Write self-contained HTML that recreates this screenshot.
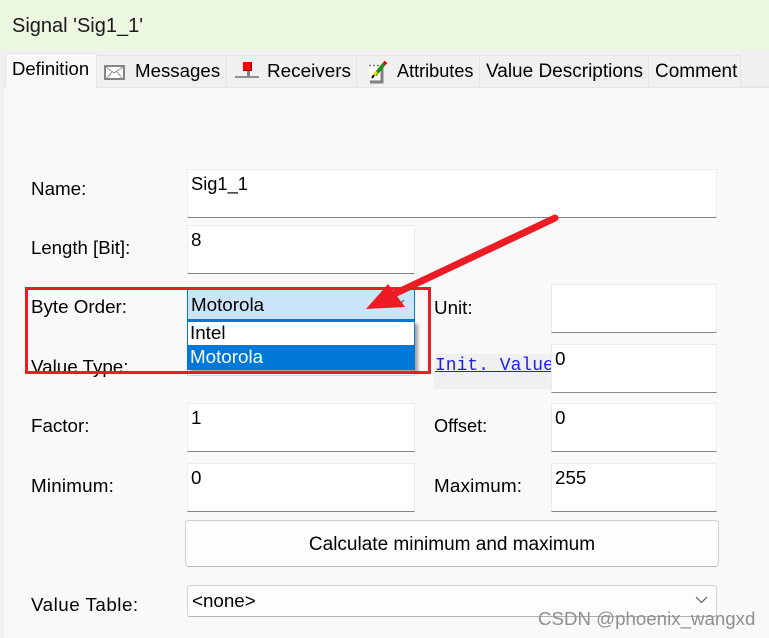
<!DOCTYPE html>
<html><head><meta charset="utf-8">
<style>
html,body{margin:0;padding:0}
body{width:769px;height:638px;overflow:hidden;position:relative;background:#f9f9f9;font-family:"Liberation Sans",sans-serif;font-size:18.8px;color:#000}
div,span{position:absolute;white-space:nowrap;box-sizing:border-box}
.t{line-height:22px}
.inp{background:#fff;border:1px solid #ececec;border-bottom:1px solid #858585}
.tab{background:#f0f0f0;border:1px solid #e4e4e4;border-bottom:none;height:32px;top:55px}
</style></head><body>
<div style="left:0;top:0;width:769px;height:50px;background:#ebf7e1"></div>
<div style="left:0;top:50px;width:769px;height:36px;background:#f0f0f0"></div>
<div style="left:0;top:86px;width:769px;height:2px;background:#e6e6e6"></div>
<div style="left:0;top:86px;width:4px;height:552px;background:#f0f0f0"></div>
<div class="t" style="left:12px;top:15px;color:#1a1a1a;font-size:20px">Signal 'Sig1_1'</div>

<div class="tab" style="left:96px;width:131px"></div>
<div class="tab" style="left:226px;width:131px"></div>
<div class="tab" style="left:356px;width:124px"></div>
<div class="tab" style="left:479px;width:170px"></div>
<div class="tab" style="left:648px;width:93px"></div>
<div style="left:5px;top:53px;width:92px;height:35px;background:#f9f9f9;border:1px solid #e4e4e4;border-bottom:none"></div>
<div class="t" style="left:12px;top:58px;font-size:18.5px">Definition</div>
<div class="t" style="left:135px;top:60px;font-size:18.7px">Messages</div>
<div class="t" style="left:267px;top:61px;font-size:18.9px">Receivers</div>
<div class="t" style="left:397px;top:60px;font-size:18.1px">Attributes</div>
<div class="t" style="left:486px;top:61px;font-size:19px">Value Descriptions</div>
<div class="t" style="left:655px;top:61px;font-size:19px">Comment</div>

<svg style="position:absolute;left:104px;top:65px" width="21" height="15" shape-rendering="crispEdges"><rect width="21" height="15" fill="#848484"/><rect x="2" y="2" width="17" height="11" fill="#fff"/><path d="M2 2L10 8L19 2M3 13L8 7M18 13L13 7" fill="none" stroke="#999" stroke-width="1"/></svg>
<svg style="position:absolute;left:234px;top:61px" width="26" height="18" shape-rendering="crispEdges"><rect x="9" y="1" width="9" height="9" fill="#f00"/><rect x="17" y="1" width="1" height="9" fill="#900"/><rect x="9" y="9" width="9" height="1" fill="#900"/><rect x="13" y="10" width="3" height="5" fill="#808080"/><rect x="1" y="15" width="24" height="2" fill="#909090"/></svg>
<svg style="position:absolute;left:366px;top:59px" width="24" height="25"><rect x="3" y="7" width="14" height="14" fill="#fff"/><path d="M4 23H16V8" fill="none" stroke="#808080" stroke-width="3"/><path d="M3 6.5H13" stroke="#808080" stroke-width="1.5" stroke-dasharray="2 2"/><path d="M9 16L18 5" stroke="#1f8a10" stroke-width="3.5"/><path d="M8 16L11 13" stroke="#ece000" stroke-width="3"/><path d="M18 5L20 3" stroke="#e00000" stroke-width="3.5"/><path d="M6 19L8 16" stroke="#000" stroke-width="2"/></svg>

<div class="t" style="left:31px;top:178px">Name:</div>
<div class="inp" style="left:187px;top:169px;width:530px;height:49px"></div>
<div class="t" style="left:191px;top:173px;font-size:18.3px">Sig1_1</div>
<div class="t" style="left:31px;top:237px;font-size:18.6px">Length [Bit]:</div>
<div class="inp" style="left:187px;top:225px;width:228px;height:49px"></div>
<div class="t" style="left:191px;top:229px">8</div>
<div class="t" style="left:31px;top:296px">Byte Order:</div>
<div class="t" style="left:31px;top:356px">Value Type:</div>
<div style="left:187px;top:350px;width:228px;height:26px;background:#fff;border:1px solid #ddd"></div>
<div style="left:187px;top:289px;width:228px;height:32px;background:#cce4f7;border:1px solid #0078d7;border-width:1px 1px 2px 1px"></div>
<div class="t" style="left:191px;top:294px">Motorola</div>
<svg style="position:absolute;left:392px;top:299px" width="14" height="9"><path d="M1 1L6.5 6.5L12 1" fill="none" stroke="#555" stroke-width="1.2"/></svg>
<div style="left:187px;top:321px;width:228px;height:49px;background:#fff;border:1px solid #0078d7;box-shadow:3px 3px 3px rgba(0,0,0,.35)"></div>
<div style="left:187px;top:345px;width:228px;height:25px;background:#0078d7"></div>
<div class="t" style="left:190px;top:322px">Intel</div>
<div class="t" style="left:190px;top:346px;color:#fff">Motorola</div>

<div class="t" style="left:434px;top:297px">Unit:</div>
<div class="inp" style="left:551px;top:284px;width:166px;height:49px"></div>
<div style="left:434px;top:354px;width:117px;height:35px;background:#f0f0f0;overflow:hidden"><span style="left:1px;top:1px;font-family:'Liberation Mono',monospace;font-size:18px;line-height:22px;color:#2020ee;text-decoration:underline">Init. Value</span></div>
<div class="inp" style="left:551px;top:344px;width:166px;height:49px"></div>
<div class="t" style="left:555px;top:348px">0</div>
<div class="t" style="left:31px;top:415px">Factor:</div>
<div class="inp" style="left:187px;top:403px;width:228px;height:49px"></div>
<div class="t" style="left:191px;top:407px">1</div>
<div class="t" style="left:434px;top:415px;font-size:18.2px">Offset:</div>
<div class="inp" style="left:551px;top:403px;width:166px;height:49px"></div>
<div class="t" style="left:555px;top:407px">0</div>
<div class="t" style="left:31px;top:475px;font-size:18.8px;letter-spacing:.2px">Minimum:</div>
<div class="inp" style="left:187px;top:463px;width:228px;height:49px"></div>
<div class="t" style="left:191px;top:467px">0</div>
<div class="t" style="left:434px;top:475px;font-size:18.8px;letter-spacing:.2px">Maximum:</div>
<div class="inp" style="left:551px;top:463px;width:166px;height:49px"></div>
<div class="t" style="left:555px;top:467px">255</div>
<div style="left:185px;top:520px;width:534px;height:47px;background:#fdfdfd;border:1px solid #d0d0d0;border-bottom:1px solid #b8b8b8;border-radius:4px"></div>
<div class="t" style="left:185px;top:534px;width:534px;text-align:center;font-size:19px">Calculate minimum and maximum</div>
<div class="t" style="left:31px;top:594px;font-size:18.8px;letter-spacing:.5px">Value Table:</div>
<div style="left:187px;top:585px;width:530px;height:32px;background:#fdfdfd;border:1px solid #d6d6d6;border-bottom:1px solid #b0b0b0;border-radius:3px"></div>
<div class="t" style="left:192px;top:590px">&lt;none&gt;</div>
<svg style="position:absolute;left:695px;top:596px" width="14" height="9"><path d="M1 1L6.5 6.5L12 1" fill="none" stroke="#555" stroke-width="1.1"/></svg>

<svg style="position:absolute;left:0;top:0" width="769" height="638">
<rect x="26.5" y="288.5" width="403" height="84" fill="none" stroke="#ed1c24" stroke-width="3"/>
<path d="M555 218L392 295" stroke="#ed1c24" stroke-width="7" stroke-linecap="round" fill="none"/>
<path d="M366 309L388 284L405 307Z" fill="#ed1c24"/>
</svg>
<div style="left:538px;top:608px;font-size:18.7px;line-height:22px;color:#8f8f8f">CSDN @phoenix_wangxd</div>
</body></html>
